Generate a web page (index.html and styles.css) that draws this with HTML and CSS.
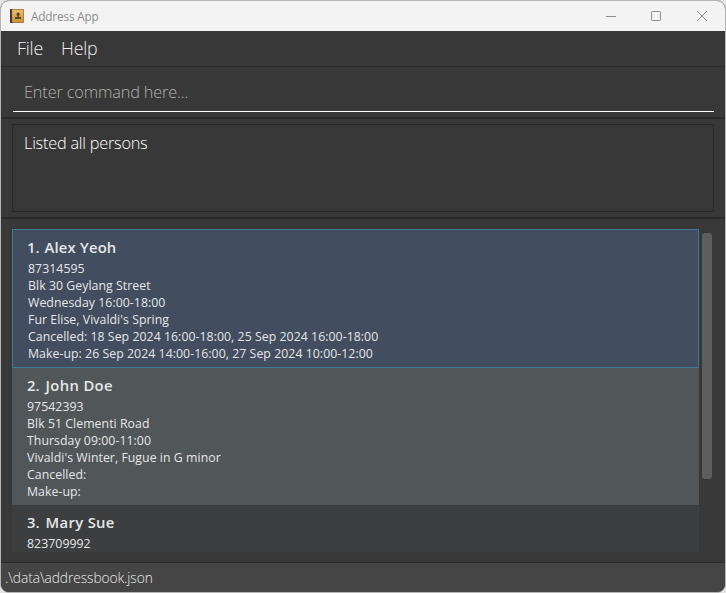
FILE: index.html
```html
<!DOCTYPE html>
<html lang="en">
<head>
<meta charset="utf-8">
<title>Address App</title>
<link rel="stylesheet" href="styles.css">
</head>
<body>
<div class="window">
  <header class="titlebar">
    <svg class="app-icon" width="14" height="14" viewBox="0 0 14 14">
      <defs><linearGradient id="cover" x1="0" y1="0" x2="0" y2="1"><stop offset="0" stop-color="#e6bd72"/><stop offset="1" stop-color="#cb9540"/></linearGradient></defs>
      <rect width="14" height="14" rx=".8" fill="#a87535"/>
      <rect x="2.2" y=".8" width="11" height="12.200" fill="url(#cover)"/>
      <rect width="2" height="14" rx=".6" fill="#4e3a2b"/>
      <path d="M6.500 5.200a1.600 1.700 0 0 1 3.200 0c0 .9-.4 1.400-.8 1.800v1h2.100v1.900H5V8h2.300V7c-.4-.4-.8-.9-.8-1.800z" fill="#5a431f"/>
    </svg>
    <span class="app-name">Address App</span>
    <div class="controls">
      <svg width="12" height="12" viewBox="0 0 12 12"><path d="M1 6.500H11"/></svg>
      <svg width="12" height="12" viewBox="0 0 12 12"><rect x="1.500" y="1.500" width="9" height="9" rx=".8"/></svg>
      <svg width="12" height="12" viewBox="0 0 12 12"><path d="M1 1L11 11M11 1L1 11"/></svg>
    </div>
  </header>
  <nav class="menubar"><span class="file">File</span><span class="help">Help</span></nav>
  <section class="command"><div class="field"><span>Enter command here...</span></div></section>
  <section class="result"><div class="result-box"><span>Listed all persons</span></div></section>
  <main class="persons">
    <div class="list">
      <article class="card selected">
        <h2><span class="num">1.</span><span>Alex Yeoh</span></h2>
        <p>87314595</p>
        <p>Blk 30 Geylang Street</p>
        <p>Wednesday 16:00-18:00</p>
        <p>Fur Elise, Vivaldi's Spring</p>
        <p>Cancelled: 18 Sep 2024 16:00-18:00, 25 Sep 2024 16:00-18:00</p>
        <p>Make-up: 26 Sep 2024 14:00-16:00, 27 Sep 2024 10:00-12:00</p>
      </article>
      <article class="card odd">
        <h2><span class="num">2.</span><span>John Doe</span></h2>
        <p>97542393</p>
        <p>Blk 51 Clementi Road</p>
        <p>Thursday 09:00-11:00</p>
        <p>Vivaldi's Winter, Fugue in G minor</p>
        <p>Cancelled:</p>
        <p>Make-up:</p>
      </article>
      <article class="card last">
        <h2><span class="num">3.</span><span>Mary Sue</span></h2>
        <p>823709992</p>
      </article>
    </div>
    <div class="scrollbar"><div class="thumb"></div></div>
  </main>
  <footer class="status"><span>.\data\addressbook.json</span></footer>
</div>
</body>
</html>
```
FILE: styles.css
```css
* { box-sizing: border-box; }
body { margin: 0; background: #e4e4e4; font-family: "Open Sans", "Noto Sans", sans-serif; }
.window {
  width: 726px; height: 593px; overflow: hidden;
  display: flex; flex-direction: column;
  background: #383838;
  border: 1px solid #b5b5b5; border-radius: 9px;
}
.titlebar { height: 30px; background: #f3f3f3; display: flex; align-items: center; padding: 0 17px 0 9px; flex: none; }
.app-name { margin-left: 7px; font-size: 11.8px; letter-spacing: -.18px; line-height: 30px; color: #8c8c8c; }
.controls { margin-left: auto; display: flex; gap: 33px; }
.controls svg { display: block; fill: none; stroke: #8c8c8c; stroke-width: 1; }
.controls svg:last-child { margin-left: 1px; }
.menubar { height: 36px; flex: none; border-bottom: 1px solid #2a2a2a; padding-left: 16px; display: flex; gap: 18px; font-size: 17.8px; letter-spacing: -.18px; font-weight: 300; line-height: 35px; color: #f0f0f0; }
.command { height: 52px; flex: none; padding: 5px 11px 0 12px; border-bottom: 2px solid #2a2a2a; }
.field { height: 40px; border-bottom: 1px solid #fff; padding-left: 11px; font-size: 16.3px; letter-spacing: -.14px; font-weight: 300; line-height: 40px; color: #b2b2ac; }
.result { height: 100px; flex: none; padding: 5px 11px 0; border-bottom: 2px solid #2a2a2a; }
.result-box { height: 88px; border: 1px solid #2a2a2a; padding: 6px 11px; font-size: 16.3px; letter-spacing: -.22px; font-weight: 300; line-height: 24px; color: #fff; }
.persons { height: 343px; flex: none; display: flex; padding: 10px 12px 10px 11px; }
.list { width: 687px; overflow: hidden; }
.card { padding: 7px 15px 0; color: #e5e7e8; background: #3c3e3f; }
.card.selected { height: 139px; background: #424d5f; border: 1px solid #3e7b91; }
.card.odd { height: 137px; background: #515658; }
.card.last { height: 47px; }
h2 { display: flex; gap: 6px; margin: 0 0 3px; height: 20px; font-size: 14.8px; letter-spacing: .35px; line-height: 20px; font-weight: 600; }
.num { letter-spacing: 0; }
.selected .num { margin: 0 -1px 0 -1px; }
.selected h2 { letter-spacing: .2px; }
p { margin: 0; font-size: 12.3px; letter-spacing: .045px; line-height: 17px; height: 17px; white-space: nowrap; }
.scrollbar { width: 10px; margin-left: 3px; padding-top: 4px; }
.thumb { height: 246px; border-radius: 3px; background: #5e5e5e; }
.status { flex: 1; border-top: 1px solid #292929; background: #454545; padding-left: 4px; font-size: 13.8px; letter-spacing: -.09px; font-weight: 300; line-height: 29px; color: #eaeaea; }
```
